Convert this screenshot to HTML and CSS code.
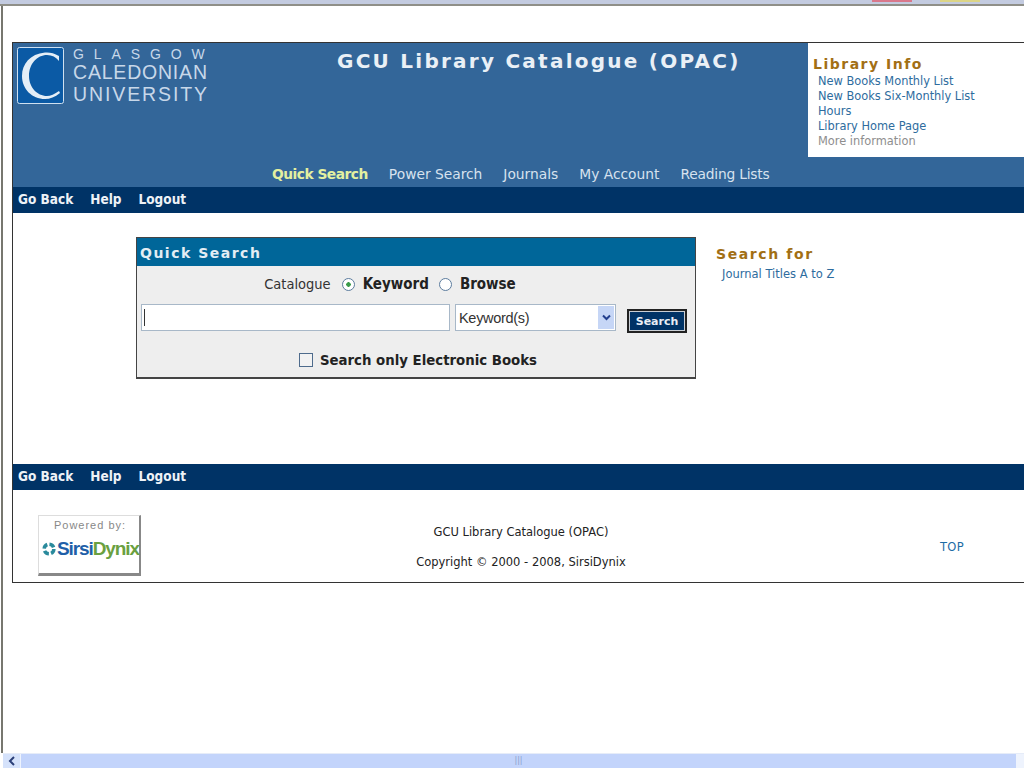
FILE: index.html
```html
<!DOCTYPE html>
<html lang="en">
<head>
<meta charset="utf-8">
<title>GCU Library Catalogue (OPAC)</title>
<link rel="stylesheet" href="styles.css">
</head>
<body>
<div class="chrome-top"><span class="tab-pink"></span><span class="tab-yellow"></span></div>
<main class="viewport">
  <div class="frame">
    <header class="masthead">
      <div class="mast-main">
        <div class="mast-row">
          <div class="logo">
            <svg class="logo-mark" width="48" height="57" viewBox="0 0 48 57">
              <rect x="0.5" y="0.5" width="46" height="56" rx="2" fill="#0b5aa5" stroke="#cfe0f0"/>
              <path d="M42 9 C37 6 32 5 28 5.500 C13 7 5 17 5 29 C5 42 15 52 28 52 C33 52 38 50 43 46 L42 44 C38 47 33 49 30 49 C20 49 12 40 12 29 C12 17 20 8 30 8 C35 8 39 10 42 14 Z" fill="#e4eef7"/>
            </svg>
            <div class="logo-text">
              <div class="logo-l1">GLASGOW</div>
              <div class="logo-l2">CALEDONIAN</div>
              <div class="logo-l3">UNIVERSITY</div>
            </div>
          </div>
          <h1 class="title">GCU Library Catalogue (OPAC)</h1>
        </div>
      </div>
      <aside class="info">
        <h2 class="info-title">Library Info</h2>
        <ul class="info-list">
          <li>New Books Monthly List</li>
          <li>New Books Six-Monthly List</li>
          <li>Hours</li>
          <li>Library Home Page</li>
          <li class="muted">More information</li>
        </ul>
      </aside>
      <nav class="tabs">
        <span class="tab tab-active">Quick Search</span>
        <span class="tab">Power Search</span>
        <span class="tab">Journals</span>
        <span class="tab">My Account</span>
        <span class="tab">Reading Lists</span>
      </nav>
    </header>
    <div class="bar"><span>Go Back</span><span>Help</span><span>Logout</span></div>
    <section class="content">
      <form class="panel">
        <div class="panel-head">Quick Search</div>
        <div class="panel-body">
          <div class="row-type">
            <span class="cat">Catalogue</span>
            <span class="radio radio-on"></span><b>Keyword</b>
            <span class="radio"></span><b>Browse</b>
          </div>
          <div class="row-input">
            <div class="text-input"><span class="caret"></span></div>
            <div class="select"><span>Keyword(s)</span>
              <span class="select-btn"><svg width="9" height="7" viewBox="0 0 9 7"><path d="M1 1.500 L4.500 5 L8 1.500" fill="none" stroke="#24408e" stroke-width="2"/></svg></span>
            </div>
            <div class="search-btn">Search</div>
          </div>
          <div class="row-check"><span class="check"></span><b>Search only Electronic Books</b></div>
        </div>
      </form>
      <aside class="side">
        <h2 class="side-title">Search for</h2>
        <div class="side-link">Journal Titles A to Z</div>
      </aside>
    </section>
    <div class="bar"><span>Go Back</span><span>Help</span><span>Logout</span></div>
    <footer class="foot">
      <div class="powered">
        <div class="powered-by">Powered by:</div>
        <div class="powered-logo">
          <svg width="16" height="18" viewBox="0 0 16 18"><circle cx="8" cy="9" r="5.500" fill="none" stroke="#2a8a9c" stroke-width="4" stroke-dasharray="6 2.600"/></svg>
          <span class="sirsi">Sirsi</span><span class="dynix">Dynix</span>
        </div>
      </div>
      <div class="foot-mid">
        <div>GCU Library Catalogue (OPAC)</div>
        <div>Copyright © 2000 - 2008, SirsiDynix</div>
      </div>
      <div class="top-link">TOP</div>
    </footer>
  </div>
</main>
<div class="scrollbar">
  <span class="sb-arrow"><svg width="8" height="10" viewBox="0 0 8 10"><path d="M6 1 L2 5 L6 9" fill="none" stroke="#2b3f78" stroke-width="2"/></svg></span>
  <span class="sb-track"><span class="sb-grip">|||</span></span>
  <span class="sb-end"></span>
</div>
</body>
</html>
```
FILE: styles.css
```css
* { box-sizing: border-box; }
html, body { margin: 0; padding: 0; height: 768px; overflow: hidden; }
body {
  display: flex;
  flex-direction: column;
  width: 1024px;
  background: #fff;
  font-family: "DejaVu Sans", Verdana, sans-serif;
  color: #222;
}
.chrome-top {
  height: 6px;
  flex: none;
  display: flex;
  align-items: flex-start;
  padding-left: 872px;
  gap: 28px;
  background: linear-gradient(#c3cbe0 0 4px, #8f8f88 4px 6px);
}
.tab-pink, .tab-yellow { width: 40px; height: 2px; }
.tab-pink { background: #d9788c; }
.tab-yellow { background: #dcd587; }
.viewport {
  flex: 1;
  min-height: 0;
  overflow: hidden;
  border-left: 2px solid #77776f;
  margin-left: 1px;
  padding: 36px 0 0 9px;
}
.frame {
  width: 1040px;
  border: 1px solid #333;
  border-right: 0;
  height: 541px;
  display: flex;
  flex-direction: column;
}
.masthead {
  height: 144px;
  flex: none;
  background: #336699;
  display: grid;
  grid-template-columns: 795px 216px;
  grid-template-rows: 114px 30px;
}
.mast-main { min-width: 0; }
.mast-row { display: flex; }
.logo { display: flex; margin: 4px 0 0 4px; width: 284px; height: 57px; gap: 8px; flex: none; }
.logo-mark { flex: none; }
.logo-text { color: #c8d8e9; font-family: "Liberation Sans", Arial, sans-serif; white-space: nowrap; }
.logo-l1 { font-size: 14px; line-height: 15px; letter-spacing: 9.9px; height: 15px; }
.logo-l2 { font-size: 19.5px; line-height: 20px; letter-spacing: 0.8px; height: 22px; }
.logo-l3 { font-size: 19.5px; line-height: 20px; letter-spacing: 1.9px; }
.title {
  margin: 5px 0 0 36px;
  font-size: 20px;
  line-height: 26px;
  font-weight: 700;
  letter-spacing: 2.25px;
  color: #eaf0f6;
  white-space: nowrap;
}
.info { background: #fff; padding: 14px 0 0 5px; grid-column: 2; grid-row: 1; }
.info-title { margin: 0 0 2px; font-size: 14px; line-height: 15px; font-weight: 700; letter-spacing: 1.5px; color: #a26f14; }
.info-list { list-style: none; margin: 0; padding: 0 0 0 5px; font-size: 11.400px; line-height: 15px; color: #2e6c9e; }
.muted { color: #8e8e8e; }
.tabs {
  grid-column: 1 / 3;
  grid-row: 2;
  display: flex;
  gap: 21px;
  padding: 7px 0 0 259px;
  font-size: 13.8px;
  line-height: 20px;
  color: #d7e2ee;
}
.tab { white-space: nowrap; }
.tab:last-child { letter-spacing: -0.2px; }
.tab-active { color: #e3f0a0; font-weight: 700; letter-spacing: -0.5px; }
.bar {
  height: 26px;
  flex: none;
  background: #003366;
  color: #eef2f7;
  font-size: 13.5px;
  font-stretch: condensed;
  line-height: 24px;
  font-weight: 700;
  padding-left: 5px;
  display: flex;
  gap: 17px;
}
.content { height: 251px; flex: none; display: flex; align-items: flex-start; padding: 24px 0 0 123px; }
.panel {
  width: 560px;
  height: 142px;
  border: 1px solid #444;
  border-bottom-width: 2px;
  background: #eee;
  flex: none;
}
.panel-head {
  height: 28px;
  background: #006699;
  color: #e3edf4;
  font-size: 14px;
  font-weight: 700;
  letter-spacing: 1.5px;
  line-height: 30px;
  padding-left: 3px;
}
.panel-body { display: flex; flex-direction: column; }
.row-type {
  display: flex;
  justify-content: center;
  align-items: center;
  height: 36px;
  padding-right: 52px;
  font-stretch: condensed;
}
.row-type b { font-size: 15px; }
.cat { font-size: 14.5px; margin-right: 11px; color: #333; }
.row-type b + .radio { margin-left: 10px; }
.radio {
  width: 13px;
  height: 13px;
  border-radius: 50%;
  border: 1px solid #5c7c9e;
  background: #fff;
  margin-right: 8px;
  display: block;
  flex: none;
}
.radio-on { background: radial-gradient(circle, #3a9a4a 0 2px, #fff 2.500px); }
.row-input { display: flex; align-items: flex-start; height: 44px; padding: 2px 0 0 4px; }
.text-input {
  width: 309px;
  height: 27px;
  background: #fff;
  border: 1px solid #a8b8c8;
  padding: 4px 0 0 2px;
  flex: none;
}
.caret { display: block; width: 1px; height: 17px; background: #333; }
.select {
  width: 161px;
  height: 27px;
  margin-left: 5px;
  flex: none;
  background: #fff;
  border: 1px solid #a8b8c8;
  display: flex;
  justify-content: space-between;
  align-items: center;
  padding: 0 1px 0 3px;
  font-family: "Liberation Sans", Arial, sans-serif;
  font-size: 14.5px;
  letter-spacing: -0.3px;
  color: #333;
}
.select-btn {
  width: 16px;
  height: 23px;
  background: #c6d6f6;
  display: flex;
  align-items: center;
  justify-content: center;
}
.search-btn {
  margin: 5px 0 0 11px;
  width: 60px;
  height: 24px;
  background: #003366;
  border: 2px solid #222;
  outline: 1px solid #c9ced4;
  outline-offset: -3px;
  color: #e8eef5;
  font-size: 11px;
  font-weight: 700;
  line-height: 21px;
  text-align: center;
  flex: none;
}
.row-check {
  display: flex;
  justify-content: center;
  align-items: center;
  height: 27px;
  padding-left: 4px;
  font-size: 14.8px;
  font-stretch: condensed;
}
.check {
  width: 14px;
  height: 14px;
  border: 1px solid #4e6b8c;
  background: #f2f2f2;
  margin-right: 7px;
}
.side { margin-left: 20px; padding-top: 10px; }
.side-title { margin: 0; font-size: 14px; line-height: 15px; letter-spacing: 1.600px; font-weight: 700; color: #a26f14; }
.side-link { font-size: 11.5px; line-height: 15px; padding: 5px 0 0 6px; color: #2e6c9e; }
.foot { flex: 1; display: flex; align-items: flex-start; padding: 25px 0 0 25px; }
.powered {
  width: 103px;
  height: 61px;
  border: 1px solid #ddd;
  border-right: 2px solid #888;
  border-bottom: 3px solid #888;
  flex: none;
  text-align: center;
}
.powered-by { font-size: 11px; line-height: 14px; margin-top: 2px; letter-spacing: 1px; padding-left: 2px; color: #888; font-family: "Liberation Sans", Arial, sans-serif; }
.powered-logo {
  display: flex;
  align-items: center;
  justify-content: flex-start;
  padding-left: 3px;
  margin-top: 6px;
  font-family: "Liberation Sans", Arial, sans-serif;
  font-weight: 700;
  font-size: 19px;
  letter-spacing: -1.1px;
  line-height: 22px;
}
.sirsi { color: #1f5fa8; margin-left: 1px; }
.dynix { color: #6aa040; }
.foot-mid {
  width: 240px;
  margin-left: 260px;
  text-align: center;
  font-size: 11.5px;
  line-height: 30px;
  padding-top: 2px;
  color: #222;
  flex: none;
}
.top-link { margin-left: 299px; padding-top: 25px; font-size: 11.5px; letter-spacing: 0.3px; line-height: 15px; color: #1d6ca5; }
.scrollbar {
  height: 15px;
  flex: none;
  display: flex;
  margin-left: 3px;
  background: #c3d4fb;
  border-top: 1px solid #e6ecf8;
}
.sb-arrow { width: 17px; display: flex; align-items: center; justify-content: center; background: #d5e2fb; flex: none; }
.sb-track { flex: 1; text-align: center; font-size: 8px; line-height: 14px; color: #8aa0cc; border-left: 1px solid #eef3fd; }
.sb-grip { display: inline-block; }
.sb-end { width: 8px; flex: none; background: #eef3fd; }
```
